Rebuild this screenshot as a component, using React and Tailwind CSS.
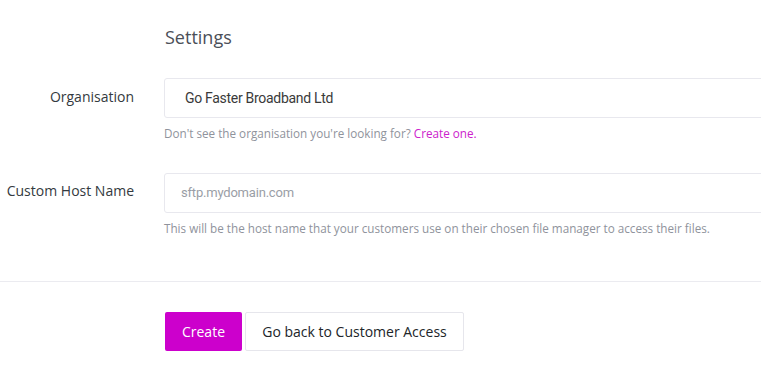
export default function App() {
  return (
    <div className="w-[761px] h-[371px] overflow-hidden bg-white font-['Open_Sans',sans-serif]">
      <div className="pt-[24px] pl-[165px]">
        <h2 className="text-[18px] leading-[26px] font-medium text-[#4b4f58]">Settings</h2>
      </div>
      <div className="mt-[28px] flex">
        <div className="w-[164px] shrink-0 pr-[30px] pt-[9px] text-right text-[14px] leading-[20px] text-[#343a40]">
          Organisation
        </div>
        <div className="w-[700px] shrink-0">
          <div className="h-[40px] border border-[#e8e8ee] rounded-[3px] flex items-center pl-[20px] font-['Roboto',sans-serif] text-[14px] tracking-[-0.3px] text-[#3a3a3a]">
            Go Faster Broadband Ltd
          </div>
          <p className="mt-[7px] text-[11.7px] leading-[16px] text-[#8f939c]">
            Don't see the organisation you're looking for? <span className="text-[#cc22cc]">Create one.</span>
          </p>
        </div>
      </div>
      <div className="mt-[32px] flex">
        <div className="w-[164px] shrink-0 pr-[30px] pt-[8px] text-right text-[14px] leading-[20px] text-[#343a40]">
          Custom Host Name
        </div>
        <div className="w-[700px] shrink-0">
          <div className="h-[40px] border border-[#e8e8ee] rounded-[3px] flex items-center pl-[16px] font-['Roboto',sans-serif] text-[13px] tracking-[-0.2px] text-[#9a9ea6]">
            sftp.mydomain.com
          </div>
          <p className="mt-[7px] text-[11.7px] leading-[16px] text-[#8f939c]">
            This will be the host name that your customers use on their chosen file manager to access their files.
          </p>
        </div>
      </div>
      <div className="mt-[45px] border-t border-[#ebebf0]"></div>
      <div className="mt-[30px] pl-[165px] flex gap-[3px]">
        <button className="h-[39px] w-[77px] rounded-[2px] bg-[#cc00cc] text-white text-[14px]">Create</button>
        <button className="h-[39px] w-[219px] rounded-[2px] border border-[#e6e6ec] bg-white text-[#212529] text-[14px]">Go back to Customer Access</button>
      </div>
    </div>
  );
}
